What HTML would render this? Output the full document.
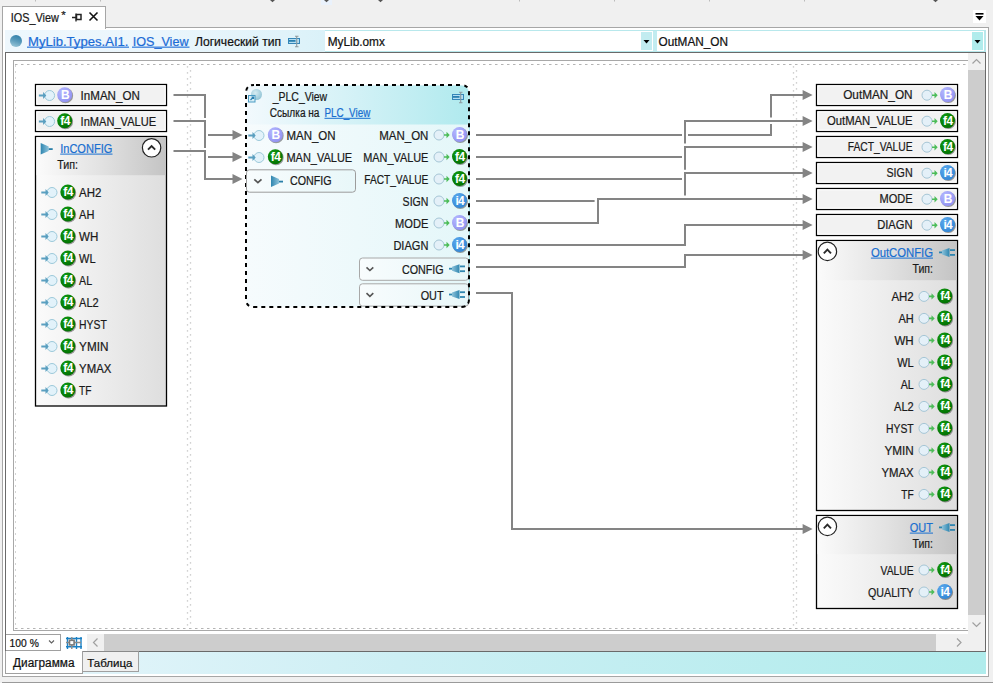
<!DOCTYPE html>
<html><head><meta charset="utf-8">
<style>
*{box-sizing:border-box}
html,body{margin:0;padding:0}
body{width:993px;height:683px;position:relative;overflow:hidden;background:#f0f0f0;font-family:"Liberation Sans",sans-serif;color:#1e1e1e}
.a{position:absolute}
.cv{position:absolute;left:0;top:0}
.lnk{color:#1a6fd0;text-decoration:underline}
</style></head><body>
<div class="a" style="left:321px;top:0;width:11px;height:5px;background:#eaf2fc"></div>
<svg class="a" style="left:0;top:0" width="993" height="6">
 <path d="M270 0h5l-2.5 2.2z M324 0h5l-2.5 2.2z M378 0h5l-2.5 2.2z M933 0h5l-2.5 2.2z" fill="#555"/>
 <path d="M35.5 0v1.5M100.5 0v1.5M519.5 0v1.5M614.5 0v1.5M709.5 0v1.5M804.5 0v1.5" stroke="#bbb" stroke-width="1"/>
</svg>
<!-- outer document panel -->
<div class="a" style="left:2px;top:27px;width:987px;height:650px;border:1px solid #a6a6a6;background:#fff"></div>
<!-- tab -->
<div class="a" style="left:2px;top:6px;width:104px;height:23px;border:1px solid #a6a6a6;border-bottom:none;background:#fff"></div>
<svg class="a" style="left:70px;top:10px" width="32" height="14" viewBox="0 0 32 14">
 <path d="M2 7.5h4M6 3.5v8" stroke="#222" stroke-width="1.3" fill="none"/>
 <rect x="6.5" y="4.5" width="4.5" height="5" fill="none" stroke="#222" stroke-width="1.5"/>
 <path d="M19.5 2.5l8 8M27.5 2.5l-8 8" stroke="#111" stroke-width="1.6"/>
</svg>
<!-- overflow icon -->
<div class="a" style="left:973px;top:10px;width:13px;height:13px;background:#fff"></div>
<svg class="a" style="left:973px;top:10px" width="13" height="13" viewBox="0 0 13 13">
 <rect x="2.5" y="3" width="8" height="1.6" fill="#000"/>
 <path d="M2.5 6h8l-4 4.6z" fill="#000"/>
</svg>
<!-- info bar -->
<div class="a" style="left:5px;top:30px;width:981px;height:22px;background:linear-gradient(90deg,#eef7fd 0px,#ebf6fc 150px,#e0f3fa 279px,#daf1f8 320px)"></div>
<div class="a" style="left:10px;top:35px;width:12px;height:12px;border-radius:50%;background:linear-gradient(200deg,#2a7aa6 0%,#5c9cbc 50%,#a4cede 100%)"></div>
<svg class="a" style="left:284px;top:32px" width="20" height="18" viewBox="0 0 20 18">
 <rect x="4.5" y="6.5" width="11" height="5" fill="#b4def2" stroke="#3586b8" stroke-width="1"/>
 <rect x="5" y="8" width="6.5" height="1.8" fill="#2a80b0"/>
 <path d="M12.7 4.5v10M11 4.3h3.5M11 14.7h3.5" stroke="#8c9aa0" stroke-width="1.1"/>
</svg>
<!-- combos -->
<div class="a" style="left:325px;top:30px;width:661px;height:22px;border-top:1px solid #b8e8ec;border-bottom:1px solid #b8e8ec;background:#fff"></div>
<div class="a" style="left:641px;top:32px;width:11px;height:18px;background:#c2ecf0"></div>
<div class="a" style="left:653px;top:31px;width:4px;height:20px;background:#c2ecf0"></div>
<svg class="a" style="left:641px;top:32px" width="11" height="18"><path d="M2.5 8h6l-3 3.5z" fill="#000"/></svg>
<div class="a" style="left:972px;top:32px;width:11px;height:18px;background:#b0ecec"></div>
<div class="a" style="left:984px;top:30px;width:2px;height:22px;background:#b8e8ec"></div>
<svg class="a" style="left:972px;top:32px" width="11" height="18"><path d="M2.5 8h6l-3 3.5z" fill="#000"/></svg>
<!-- diagram panel -->
<div class="a" style="left:5px;top:52px;width:981px;height:600px;border:1px solid #6a6a6a;border-right-color:#6a6a6a;background:#fff"></div>
<!-- canvas border -->
<div class="a" style="left:13px;top:60px;width:960px;height:571px;border:1px solid #a8a8a8;border-right:none;background:#fff"></div>
<svg class="cv" width="993" height="683" viewBox="0 0 993 683"><defs>
<radialGradient id="gB" cx="0.35" cy="0.3" r="0.8"><stop offset="0" stop-color="#b4b8ff"/><stop offset="1" stop-color="#8f8ff0"/></radialGradient>
<radialGradient id="gF" cx="0.35" cy="0.3" r="0.8"><stop offset="0" stop-color="#129a12"/><stop offset="1" stop-color="#006e00"/></radialGradient>
<radialGradient id="gI" cx="0.35" cy="0.3" r="0.8"><stop offset="0" stop-color="#5aa8ec"/><stop offset="1" stop-color="#2f84d4"/></radialGradient>
<radialGradient id="gNodeIco" cx="0.4" cy="0.35" r="0.7"><stop offset="0" stop-color="#d6ecf2"/><stop offset="1" stop-color="#8fc2d4"/></radialGradient>
<linearGradient id="gIco" x1="0" x2="1"><stop offset="0" stop-color="#2f86b0"/><stop offset="1" stop-color="#8cc2da"/></linearGradient>
<linearGradient id="gIco2" x1="0" x2="1"><stop offset="0" stop-color="#8cc2da"/><stop offset="1" stop-color="#2f86b0"/></linearGradient>
<linearGradient id="gHead" x1="0" y1="0" x2="1" y2="0"><stop offset="0" stop-color="#fbfbfb"/><stop offset="0.5" stop-color="#e2e2e2"/><stop offset="1" stop-color="#c4c4c4"/></linearGradient>
<linearGradient id="gBody" x1="0" x2="1"><stop offset="0" stop-color="#fbfbfb"/><stop offset="1" stop-color="#dedede"/></linearGradient>
<linearGradient id="gMidHead" x1="0" y1="0" x2="1" y2="0"><stop offset="0" stop-color="#f2f9fd"/><stop offset="0.5" stop-color="#d2f1f6"/><stop offset="1" stop-color="#b0eaee"/></linearGradient>
<linearGradient id="gMidBody" x1="0" x2="1"><stop offset="0" stop-color="#f6fbfd"/><stop offset="1" stop-color="#e4f7f9"/></linearGradient>
<linearGradient id="gSub" x1="0" x2="1"><stop offset="0" stop-color="#f8fcfd"/><stop offset="1" stop-color="#e8f7f9"/></linearGradient>
</defs><g font-family="Liberation Sans, sans-serif"><g stroke="#d4d4d4" stroke-width="1"><line x1="15" y1="64.5" x2="967" y2="64.5" stroke="#b4b4b4" stroke-width="1.2" stroke-dasharray="2.5 3.5"/><line x1="15" y1="628.5" x2="967" y2="628.5" stroke="#b4b4b4" stroke-width="1.2" stroke-dasharray="2.5 3.5"/><line x1="15.5" y1="65" x2="15.5" y2="628" stroke-dasharray="2 4"/><line x1="187.5" y1="66" x2="187.5" y2="628" stroke="#d2d2d2" stroke-width="1.3" stroke-dasharray="1.8 4.2" stroke-dashoffset="0"/><line x1="190.5" y1="66" x2="190.5" y2="628" stroke="#d2d2d2" stroke-width="1.3" stroke-dasharray="1.8 4.2" stroke-dashoffset="2"/><line x1="793.5" y1="66" x2="793.5" y2="628" stroke="#d2d2d2" stroke-width="1.3" stroke-dasharray="1.8 4.2" stroke-dashoffset="0"/><line x1="796.5" y1="66" x2="796.5" y2="628" stroke="#d2d2d2" stroke-width="1.3" stroke-dasharray="1.8 4.2" stroke-dashoffset="2"/></g><rect x="35.5" y="84.5" width="131" height="21" fill="#f2f2f2" stroke="#000" stroke-width="1.3"/><rect x="36.8" y="85.8" width="128.4" height="18.4" fill="none" stroke="#fff" stroke-width="1"/><circle cx="49.6" cy="95.5" r="5" fill="#e2f2fa" stroke="#9cc9da" stroke-width="1"/><path d="M38.900000000000006 94.5h4.2v-2.6l3.2 3.6l-3.2 3.6v-2.6h-4.2z" fill="#5a9fc0"/><circle cx="65.5" cy="95.7" r="7.6" fill="#000" opacity="0.38"/><circle cx="64.7" cy="94.8" r="7.5" fill="url(#gB)"/><text x="65.3" y="99.1" text-anchor="middle" font-size="12" font-weight="bold" fill="#fff">B</text><text x="80.60" y="99.7" font-size="12" textLength="59.20" lengthAdjust="spacingAndGlyphs" fill="#1a1a1a" stroke="#1a1a1a" stroke-width="0.22" >InMAN_ON</text><rect x="35.5" y="110.5" width="131" height="21" fill="#f2f2f2" stroke="#000" stroke-width="1.3"/><rect x="36.8" y="111.8" width="128.4" height="18.4" fill="none" stroke="#fff" stroke-width="1"/><circle cx="49.6" cy="121.5" r="5" fill="#e2f2fa" stroke="#9cc9da" stroke-width="1"/><path d="M38.900000000000006 120.5h4.2v-2.6l3.2 3.6l-3.2 3.6v-2.6h-4.2z" fill="#5a9fc0"/><circle cx="65.5" cy="121.7" r="7.6" fill="#000" opacity="0.38"/><circle cx="64.7" cy="120.8" r="7.5" fill="url(#gF)"/><text x="65.0" y="125.0" text-anchor="middle" font-size="12" font-weight="bold" fill="#fff" letter-spacing="-0.6">f4</text><text x="80.60" y="125.7" font-size="12" textLength="75.50" lengthAdjust="spacingAndGlyphs" fill="#1a1a1a" stroke="#1a1a1a" stroke-width="0.22" >InMAN_VALUE</text><rect x="35.5" y="136.5" width="131" height="269.5" fill="url(#gBody)" stroke="#000" stroke-width="1.3"/><rect x="36.5" y="137.2" width="129.2" height="38" fill="url(#gHead)"/><path d="M40.7 143L48.7 146.5V151L40.7 154.5Z" fill="url(#gIco)"/><rect x="48.7" y="148.2" width="4" height="1.8" fill="#2a7fa8"/><text x="60.20" y="152.7" font-size="12" textLength="52.10" lengthAdjust="spacingAndGlyphs" fill="#1a6fd0" stroke="#1a6fd0" stroke-width="0.22" >InCONFIG</text><rect x="60.2" y="153.6" width="52.3" height="1" fill="#1a6fd0"/><text x="57.20" y="168.8" font-size="12" textLength="20.80" lengthAdjust="spacingAndGlyphs" fill="#1a1a1a" stroke="#1a1a1a" stroke-width="0.22" >Тип:</text><circle cx="151.6" cy="147.8" r="9.2" fill="#fff" stroke="#222" stroke-width="1.2"/><path d="M148.0 149.70000000000002L151.6 146.10000000000002L155.2 149.70000000000002" fill="none" stroke="#2a2a2a" stroke-width="1.9"/><circle cx="52" cy="192.5" r="5" fill="#e2f2fa" stroke="#9cc9da" stroke-width="1"/><path d="M41.3 191.5h4.2v-2.6l3.2 3.6l-3.2 3.6v-2.6h-4.2z" fill="#5a9fc0"/><circle cx="68.6" cy="192.9" r="7.6" fill="#000" opacity="0.38"/><circle cx="67.8" cy="192.0" r="7.5" fill="url(#gF)"/><text x="68.1" y="196.2" text-anchor="middle" font-size="12" font-weight="bold" fill="#fff" letter-spacing="-0.6">f4</text><text x="79.10" y="197.1" font-size="12" textLength="22.30" lengthAdjust="spacingAndGlyphs" fill="#1a1a1a" stroke="#1a1a1a" stroke-width="0.22" >AH2</text><circle cx="52" cy="214.5" r="5" fill="#e2f2fa" stroke="#9cc9da" stroke-width="1"/><path d="M41.3 213.5h4.2v-2.6l3.2 3.6l-3.2 3.6v-2.6h-4.2z" fill="#5a9fc0"/><circle cx="68.6" cy="214.9" r="7.6" fill="#000" opacity="0.38"/><circle cx="67.8" cy="214.0" r="7.5" fill="url(#gF)"/><text x="68.1" y="218.2" text-anchor="middle" font-size="12" font-weight="bold" fill="#fff" letter-spacing="-0.6">f4</text><text x="79.10" y="219.1" font-size="12" textLength="15.30" lengthAdjust="spacingAndGlyphs" fill="#1a1a1a" stroke="#1a1a1a" stroke-width="0.22" >AH</text><circle cx="52" cy="236.5" r="5" fill="#e2f2fa" stroke="#9cc9da" stroke-width="1"/><path d="M41.3 235.5h4.2v-2.6l3.2 3.6l-3.2 3.6v-2.6h-4.2z" fill="#5a9fc0"/><circle cx="68.6" cy="236.9" r="7.6" fill="#000" opacity="0.38"/><circle cx="67.8" cy="236.0" r="7.5" fill="url(#gF)"/><text x="68.1" y="240.2" text-anchor="middle" font-size="12" font-weight="bold" fill="#fff" letter-spacing="-0.6">f4</text><text x="79.10" y="241.1" font-size="12" textLength="19.30" lengthAdjust="spacingAndGlyphs" fill="#1a1a1a" stroke="#1a1a1a" stroke-width="0.22" >WH</text><circle cx="52" cy="258.5" r="5" fill="#e2f2fa" stroke="#9cc9da" stroke-width="1"/><path d="M41.3 257.5h4.2v-2.6l3.2 3.6l-3.2 3.6v-2.6h-4.2z" fill="#5a9fc0"/><circle cx="68.6" cy="258.9" r="7.6" fill="#000" opacity="0.38"/><circle cx="67.8" cy="258.0" r="7.5" fill="url(#gF)"/><text x="68.1" y="262.2" text-anchor="middle" font-size="12" font-weight="bold" fill="#fff" letter-spacing="-0.6">f4</text><text x="79.10" y="263.1" font-size="12" textLength="16.50" lengthAdjust="spacingAndGlyphs" fill="#1a1a1a" stroke="#1a1a1a" stroke-width="0.22" >WL</text><circle cx="52" cy="280.5" r="5" fill="#e2f2fa" stroke="#9cc9da" stroke-width="1"/><path d="M41.3 279.5h4.2v-2.6l3.2 3.6l-3.2 3.6v-2.6h-4.2z" fill="#5a9fc0"/><circle cx="68.6" cy="280.9" r="7.6" fill="#000" opacity="0.38"/><circle cx="67.8" cy="280.0" r="7.5" fill="url(#gF)"/><text x="68.1" y="284.2" text-anchor="middle" font-size="12" font-weight="bold" fill="#fff" letter-spacing="-0.6">f4</text><text x="79.10" y="285.1" font-size="12" textLength="13.00" lengthAdjust="spacingAndGlyphs" fill="#1a1a1a" stroke="#1a1a1a" stroke-width="0.22" >AL</text><circle cx="52" cy="302.5" r="5" fill="#e2f2fa" stroke="#9cc9da" stroke-width="1"/><path d="M41.3 301.5h4.2v-2.6l3.2 3.6l-3.2 3.6v-2.6h-4.2z" fill="#5a9fc0"/><circle cx="68.6" cy="302.9" r="7.6" fill="#000" opacity="0.38"/><circle cx="67.8" cy="302.0" r="7.5" fill="url(#gF)"/><text x="68.1" y="306.2" text-anchor="middle" font-size="12" font-weight="bold" fill="#fff" letter-spacing="-0.6">f4</text><text x="79.10" y="307.1" font-size="12" textLength="19.60" lengthAdjust="spacingAndGlyphs" fill="#1a1a1a" stroke="#1a1a1a" stroke-width="0.22" >AL2</text><circle cx="52" cy="324.5" r="5" fill="#e2f2fa" stroke="#9cc9da" stroke-width="1"/><path d="M41.3 323.5h4.2v-2.6l3.2 3.6l-3.2 3.6v-2.6h-4.2z" fill="#5a9fc0"/><circle cx="68.6" cy="324.9" r="7.6" fill="#000" opacity="0.38"/><circle cx="67.8" cy="324.0" r="7.5" fill="url(#gF)"/><text x="68.1" y="328.2" text-anchor="middle" font-size="12" font-weight="bold" fill="#fff" letter-spacing="-0.6">f4</text><text x="79.10" y="329.1" font-size="12" textLength="27.70" lengthAdjust="spacingAndGlyphs" fill="#1a1a1a" stroke="#1a1a1a" stroke-width="0.22" >HYST</text><circle cx="52" cy="346.5" r="5" fill="#e2f2fa" stroke="#9cc9da" stroke-width="1"/><path d="M41.3 345.5h4.2v-2.6l3.2 3.6l-3.2 3.6v-2.6h-4.2z" fill="#5a9fc0"/><circle cx="68.6" cy="346.9" r="7.6" fill="#000" opacity="0.38"/><circle cx="67.8" cy="346.0" r="7.5" fill="url(#gF)"/><text x="68.1" y="350.2" text-anchor="middle" font-size="12" font-weight="bold" fill="#fff" letter-spacing="-0.6">f4</text><text x="79.10" y="351.1" font-size="12" textLength="29.30" lengthAdjust="spacingAndGlyphs" fill="#1a1a1a" stroke="#1a1a1a" stroke-width="0.22" >YMIN</text><circle cx="52" cy="368.5" r="5" fill="#e2f2fa" stroke="#9cc9da" stroke-width="1"/><path d="M41.3 367.5h4.2v-2.6l3.2 3.6l-3.2 3.6v-2.6h-4.2z" fill="#5a9fc0"/><circle cx="68.6" cy="368.9" r="7.6" fill="#000" opacity="0.38"/><circle cx="67.8" cy="368.0" r="7.5" fill="url(#gF)"/><text x="68.1" y="372.2" text-anchor="middle" font-size="12" font-weight="bold" fill="#fff" letter-spacing="-0.6">f4</text><text x="79.10" y="373.1" font-size="12" textLength="32.20" lengthAdjust="spacingAndGlyphs" fill="#1a1a1a" stroke="#1a1a1a" stroke-width="0.22" >YMAX</text><circle cx="52" cy="390.5" r="5" fill="#e2f2fa" stroke="#9cc9da" stroke-width="1"/><path d="M41.3 389.5h4.2v-2.6l3.2 3.6l-3.2 3.6v-2.6h-4.2z" fill="#5a9fc0"/><circle cx="68.6" cy="390.9" r="7.6" fill="#000" opacity="0.38"/><circle cx="67.8" cy="390.0" r="7.5" fill="url(#gF)"/><text x="68.1" y="394.2" text-anchor="middle" font-size="12" font-weight="bold" fill="#fff" letter-spacing="-0.6">f4</text><text x="79.10" y="395.1" font-size="12" textLength="12.40" lengthAdjust="spacingAndGlyphs" fill="#1a1a1a" stroke="#1a1a1a" stroke-width="0.22" >TF</text><path d="M254 85 H461 Q469 85 469 93 V299 Q469 307 461 307 H254 Q246 307 246 299 V93 Q246 85 254 85Z" fill="url(#gMidBody)"/><line x1="469.5" y1="92" x2="469.5" y2="300" stroke="#a8e6ea" stroke-width="1"/><path d="M254 85.5 H461 Q468.5 85.5 468.5 93 V124.5 H246.5 V93 Q246.5 85.5 254 85.5Z" fill="url(#gMidHead)"/><circle cx="256.5" cy="94.5" r="5.5" fill="url(#gNodeIco)"/><rect x="248.5" y="95.5" width="6.5" height="6.5" fill="#d8eef6" stroke="#4a9cc4" stroke-width="1"/><path d="M250.5 100 L253.5 97 M251.5 97 h2 v2" stroke="#2a7fb0" stroke-width="1.2" fill="none"/><text x="272.77" y="101.2" font-size="12" textLength="54.40" lengthAdjust="spacingAndGlyphs" fill="#1a1a1a" stroke="#1a1a1a" stroke-width="0.22" >_PLC_View</text><text x="269.80" y="116.6" font-size="12" textLength="49.69" lengthAdjust="spacingAndGlyphs" fill="#1a1a1a" stroke="#1a1a1a" stroke-width="0.22" >Ссылка на</text><text x="324.50" y="116.6" font-size="12" textLength="45.77" lengthAdjust="spacingAndGlyphs" fill="#1a6fd0" stroke="#1a6fd0" stroke-width="0.22" >PLC_View</text><rect x="324.5" y="117.8" width="46" height="1" fill="#1a6fd0"/><rect x="452.5" y="94.5" width="11" height="5" fill="#b4def2" stroke="#3586b8" stroke-width="1"/><rect x="453" y="96" width="6.5" height="1.8" fill="#2a80b0"/><path d="M460.7 92.5v10M459 92.3h3.5M459 102.7h3.5" stroke="#8c9aa0" stroke-width="1.1"/><circle cx="259" cy="135.5" r="5" fill="#e2f2fa" stroke="#9cc9da" stroke-width="1"/><path d="M248.3 134.5h4.2v-2.6l3.2 3.6l-3.2 3.6v-2.6h-4.2z" fill="#5a9fc0"/><circle cx="276.1" cy="135.70000000000002" r="7.6" fill="#000" opacity="0.38"/><circle cx="275.3" cy="134.8" r="7.5" fill="url(#gB)"/><text x="275.90000000000003" y="139.10000000000002" text-anchor="middle" font-size="12" font-weight="bold" fill="#fff">B</text><text x="286.40" y="139.8" font-size="12" textLength="49.20" lengthAdjust="spacingAndGlyphs" fill="#1a1a1a" stroke="#1a1a1a" stroke-width="0.22" >MAN_ON</text><circle cx="259" cy="157.5" r="5" fill="#e2f2fa" stroke="#9cc9da" stroke-width="1"/><path d="M248.3 156.5h4.2v-2.6l3.2 3.6l-3.2 3.6v-2.6h-4.2z" fill="#5a9fc0"/><circle cx="276.1" cy="157.70000000000002" r="7.6" fill="#000" opacity="0.38"/><circle cx="275.3" cy="156.8" r="7.5" fill="url(#gF)"/><text x="275.6" y="161.0" text-anchor="middle" font-size="12" font-weight="bold" fill="#fff" letter-spacing="-0.6">f4</text><text x="286.40" y="161.7" font-size="12" textLength="65.80" lengthAdjust="spacingAndGlyphs" fill="#1a1a1a" stroke="#1a1a1a" stroke-width="0.22" >MAN_VALUE</text><text x="379.30" y="139.7" font-size="12" textLength="49.10" lengthAdjust="spacingAndGlyphs" fill="#1a1a1a" stroke="#1a1a1a" stroke-width="0.22" >MAN_ON</text><circle cx="439" cy="135" r="5" fill="#e4f0f8" stroke="#a6c6d6" stroke-width="1"/><path d="M444 134.2h2.5v-2.4l3.2 3.2l-3.2 3.2v-2.4h-2.5z" fill="#4cbc58"/><circle cx="460.3" cy="135.4" r="7.6" fill="#000" opacity="0.38"/><circle cx="459.5" cy="134.5" r="7.5" fill="url(#gB)"/><text x="460.1" y="138.8" text-anchor="middle" font-size="12" font-weight="bold" fill="#fff">B</text><text x="363.20" y="161.7" font-size="12" textLength="65.20" lengthAdjust="spacingAndGlyphs" fill="#1a1a1a" stroke="#1a1a1a" stroke-width="0.22" >MAN_VALUE</text><circle cx="439" cy="157" r="5" fill="#e4f0f8" stroke="#a6c6d6" stroke-width="1"/><path d="M444 156.2h2.5v-2.4l3.2 3.2l-3.2 3.2v-2.4h-2.5z" fill="#4cbc58"/><circle cx="460.3" cy="157.4" r="7.6" fill="#000" opacity="0.38"/><circle cx="459.5" cy="156.5" r="7.5" fill="url(#gF)"/><text x="459.8" y="160.7" text-anchor="middle" font-size="12" font-weight="bold" fill="#fff" letter-spacing="-0.6">f4</text><text x="364.30" y="183.7" font-size="12" textLength="64.10" lengthAdjust="spacingAndGlyphs" fill="#1a1a1a" stroke="#1a1a1a" stroke-width="0.22" >FACT_VALUE</text><circle cx="439" cy="179" r="5" fill="#e4f0f8" stroke="#a6c6d6" stroke-width="1"/><path d="M444 178.2h2.5v-2.4l3.2 3.2l-3.2 3.2v-2.4h-2.5z" fill="#4cbc58"/><circle cx="460.3" cy="179.4" r="7.6" fill="#000" opacity="0.38"/><circle cx="459.5" cy="178.5" r="7.5" fill="url(#gF)"/><text x="459.8" y="182.7" text-anchor="middle" font-size="12" font-weight="bold" fill="#fff" letter-spacing="-0.6">f4</text><text x="402.60" y="205.7" font-size="12" textLength="25.80" lengthAdjust="spacingAndGlyphs" fill="#1a1a1a" stroke="#1a1a1a" stroke-width="0.22" >SIGN</text><circle cx="439" cy="201" r="5" fill="#e4f0f8" stroke="#a6c6d6" stroke-width="1"/><path d="M444 200.2h2.5v-2.4l3.2 3.2l-3.2 3.2v-2.4h-2.5z" fill="#4cbc58"/><circle cx="460.3" cy="201.4" r="7.6" fill="#000" opacity="0.38"/><circle cx="459.5" cy="200.5" r="7.5" fill="url(#gI)"/><text x="459.8" y="204.7" text-anchor="middle" font-size="12" font-weight="bold" fill="#fff" letter-spacing="-0.6">i4</text><text x="395.10" y="227.7" font-size="12" textLength="33.30" lengthAdjust="spacingAndGlyphs" fill="#1a1a1a" stroke="#1a1a1a" stroke-width="0.22" >MODE</text><circle cx="439" cy="223" r="5" fill="#e4f0f8" stroke="#a6c6d6" stroke-width="1"/><path d="M444 222.2h2.5v-2.4l3.2 3.2l-3.2 3.2v-2.4h-2.5z" fill="#4cbc58"/><circle cx="460.3" cy="223.4" r="7.6" fill="#000" opacity="0.38"/><circle cx="459.5" cy="222.5" r="7.5" fill="url(#gB)"/><text x="460.1" y="226.8" text-anchor="middle" font-size="12" font-weight="bold" fill="#fff">B</text><text x="393.40" y="249.7" font-size="12" textLength="35.00" lengthAdjust="spacingAndGlyphs" fill="#1a1a1a" stroke="#1a1a1a" stroke-width="0.22" >DIAGN</text><circle cx="439" cy="245" r="5" fill="#e4f0f8" stroke="#a6c6d6" stroke-width="1"/><path d="M444 244.2h2.5v-2.4l3.2 3.2l-3.2 3.2v-2.4h-2.5z" fill="#4cbc58"/><circle cx="460.3" cy="245.4" r="7.6" fill="#000" opacity="0.38"/><circle cx="459.5" cy="244.5" r="7.5" fill="url(#gI)"/><text x="459.8" y="248.7" text-anchor="middle" font-size="12" font-weight="bold" fill="#fff" letter-spacing="-0.6">i4</text><rect x="359.5" y="258" width="109" height="22.3" rx="3" fill="url(#gSub)" stroke="#a8a8a8" stroke-width="1"/><path d="M366.5 267.3 l3.4 3.2 l3.4 -3.2" fill="none" stroke="#555" stroke-width="1.6"/><text x="401.90" y="273.7" font-size="12" textLength="41.70" lengthAdjust="spacingAndGlyphs" fill="#1a1a1a" stroke="#1a1a1a" stroke-width="0.22" >CONFIG</text><rect x="449" y="267.8" width="3.5" height="1.8" fill="#2f86b0"/><path d="M452 266.7L459.5 264.2V273.2L452 270.7Z" fill="url(#gIco2)"/><rect x="460" y="265.5" width="5" height="1.8" fill="#2f86b0"/><rect x="460" y="270.3" width="5" height="1.8" fill="#2f86b0"/><rect x="359.5" y="283.8" width="109" height="22.3" rx="3" fill="url(#gSub)" stroke="#a8a8a8" stroke-width="1"/><path d="M366.5 293.1 l3.4 3.2 l3.4 -3.2" fill="none" stroke="#555" stroke-width="1.6"/><text x="420.70" y="299.5" font-size="12" textLength="22.90" lengthAdjust="spacingAndGlyphs" fill="#1a1a1a" stroke="#1a1a1a" stroke-width="0.22" >OUT</text><rect x="449" y="293.6" width="3.5" height="1.8" fill="#2f86b0"/><path d="M452 292.5L459.5 290.0V299.0L452 296.5Z" fill="url(#gIco2)"/><rect x="460" y="291.3" width="5" height="1.8" fill="#2f86b0"/><rect x="460" y="296.1" width="5" height="1.8" fill="#2f86b0"/><path d="M254 85 H461 Q469 85 469 93 V299 Q469 307 461 307 H254 Q246 307 246 299 V93 Q246 85 254 85Z" fill="none" stroke="#000" stroke-width="2" stroke-dasharray="4 4" stroke-dashoffset="-2"/><rect x="246.5" y="169.8" width="109" height="22.4" rx="3" fill="url(#gSub)" stroke="#9c9c9c" stroke-width="1"/><path d="M254.3 179.3 l3.6 3.4 l3.6 -3.4" fill="none" stroke="#555" stroke-width="1.7"/><path d="M271 175.5L279 179.0V183.5L271 187.0Z" fill="url(#gIco)"/><rect x="279" y="180.7" width="4" height="1.8" fill="#2a7fa8"/><text x="290.00" y="185.4" font-size="12" textLength="41.60" lengthAdjust="spacingAndGlyphs" fill="#1a1a1a" stroke="#1a1a1a" stroke-width="0.22" >CONFIG</text><rect x="816.5" y="84.5" width="141" height="21" fill="#f2f2f2" stroke="#000" stroke-width="1.3"/><rect x="817.8" y="85.8" width="138.4" height="18.4" fill="none" stroke="#fff" stroke-width="1"/><text x="843.20" y="99.4" font-size="12" textLength="69.40" lengthAdjust="spacingAndGlyphs" fill="#1a1a1a" stroke="#1a1a1a" stroke-width="0.22" >OutMAN_ON</text><circle cx="927" cy="95.2" r="5" fill="#e4f0f8" stroke="#a6c6d6" stroke-width="1"/><path d="M932 94.4h2.5v-2.4l3.2 3.2l-3.2 3.2v-2.4h-2.5z" fill="#4cbc58"/><circle cx="948.3" cy="95.5" r="7.6" fill="#000" opacity="0.38"/><circle cx="947.5" cy="94.6" r="7.5" fill="url(#gB)"/><text x="948.1" y="98.89999999999999" text-anchor="middle" font-size="12" font-weight="bold" fill="#fff">B</text><rect x="816.5" y="110.5" width="141" height="21" fill="#f2f2f2" stroke="#000" stroke-width="1.3"/><rect x="817.8" y="111.8" width="138.4" height="18.4" fill="none" stroke="#fff" stroke-width="1"/><text x="827.00" y="125.4" font-size="12" textLength="85.60" lengthAdjust="spacingAndGlyphs" fill="#1a1a1a" stroke="#1a1a1a" stroke-width="0.22" >OutMAN_VALUE</text><circle cx="927" cy="121.2" r="5" fill="#e4f0f8" stroke="#a6c6d6" stroke-width="1"/><path d="M932 120.4h2.5v-2.4l3.2 3.2l-3.2 3.2v-2.4h-2.5z" fill="#4cbc58"/><circle cx="948.3" cy="121.5" r="7.6" fill="#000" opacity="0.38"/><circle cx="947.5" cy="120.6" r="7.5" fill="url(#gF)"/><text x="947.8" y="124.8" text-anchor="middle" font-size="12" font-weight="bold" fill="#fff" letter-spacing="-0.6">f4</text><rect x="816.5" y="136.5" width="141" height="21" fill="#f2f2f2" stroke="#000" stroke-width="1.3"/><rect x="817.8" y="137.8" width="138.4" height="18.4" fill="none" stroke="#fff" stroke-width="1"/><text x="847.70" y="151.4" font-size="12" textLength="64.90" lengthAdjust="spacingAndGlyphs" fill="#1a1a1a" stroke="#1a1a1a" stroke-width="0.22" >FACT_VALUE</text><circle cx="927" cy="147.2" r="5" fill="#e4f0f8" stroke="#a6c6d6" stroke-width="1"/><path d="M932 146.39999999999998h2.5v-2.4l3.2 3.2l-3.2 3.2v-2.4h-2.5z" fill="#4cbc58"/><circle cx="948.3" cy="147.5" r="7.6" fill="#000" opacity="0.38"/><circle cx="947.5" cy="146.6" r="7.5" fill="url(#gF)"/><text x="947.8" y="150.79999999999998" text-anchor="middle" font-size="12" font-weight="bold" fill="#fff" letter-spacing="-0.6">f4</text><rect x="816.5" y="162.5" width="141" height="21" fill="#f2f2f2" stroke="#000" stroke-width="1.3"/><rect x="817.8" y="163.8" width="138.4" height="18.4" fill="none" stroke="#fff" stroke-width="1"/><text x="886.50" y="177.4" font-size="12" textLength="26.10" lengthAdjust="spacingAndGlyphs" fill="#1a1a1a" stroke="#1a1a1a" stroke-width="0.22" >SIGN</text><circle cx="927" cy="173.2" r="5" fill="#e4f0f8" stroke="#a6c6d6" stroke-width="1"/><path d="M932 172.39999999999998h2.5v-2.4l3.2 3.2l-3.2 3.2v-2.4h-2.5z" fill="#4cbc58"/><circle cx="948.3" cy="173.5" r="7.6" fill="#000" opacity="0.38"/><circle cx="947.5" cy="172.6" r="7.5" fill="url(#gI)"/><text x="947.8" y="176.79999999999998" text-anchor="middle" font-size="12" font-weight="bold" fill="#fff" letter-spacing="-0.6">i4</text><rect x="816.5" y="188.5" width="141" height="21" fill="#f2f2f2" stroke="#000" stroke-width="1.3"/><rect x="817.8" y="189.8" width="138.4" height="18.4" fill="none" stroke="#fff" stroke-width="1"/><text x="879.50" y="203.4" font-size="12" textLength="33.10" lengthAdjust="spacingAndGlyphs" fill="#1a1a1a" stroke="#1a1a1a" stroke-width="0.22" >MODE</text><circle cx="927" cy="199.2" r="5" fill="#e4f0f8" stroke="#a6c6d6" stroke-width="1"/><path d="M932 198.39999999999998h2.5v-2.4l3.2 3.2l-3.2 3.2v-2.4h-2.5z" fill="#4cbc58"/><circle cx="948.3" cy="199.5" r="7.6" fill="#000" opacity="0.38"/><circle cx="947.5" cy="198.6" r="7.5" fill="url(#gB)"/><text x="948.1" y="202.9" text-anchor="middle" font-size="12" font-weight="bold" fill="#fff">B</text><rect x="816.5" y="214.5" width="141" height="21" fill="#f2f2f2" stroke="#000" stroke-width="1.3"/><rect x="817.8" y="215.8" width="138.4" height="18.4" fill="none" stroke="#fff" stroke-width="1"/><text x="877.20" y="229.4" font-size="12" textLength="35.40" lengthAdjust="spacingAndGlyphs" fill="#1a1a1a" stroke="#1a1a1a" stroke-width="0.22" >DIAGN</text><circle cx="927" cy="225.2" r="5" fill="#e4f0f8" stroke="#a6c6d6" stroke-width="1"/><path d="M932 224.39999999999998h2.5v-2.4l3.2 3.2l-3.2 3.2v-2.4h-2.5z" fill="#4cbc58"/><circle cx="948.3" cy="225.5" r="7.6" fill="#000" opacity="0.38"/><circle cx="947.5" cy="224.6" r="7.5" fill="url(#gI)"/><text x="947.8" y="228.79999999999998" text-anchor="middle" font-size="12" font-weight="bold" fill="#fff" letter-spacing="-0.6">i4</text><rect x="816.5" y="240.5" width="141" height="270" fill="url(#gBody)" stroke="#000" stroke-width="1.3"/><rect x="817.5" y="241.2" width="139.3" height="39" fill="url(#gHead)"/><circle cx="827.4" cy="251.4" r="9.2" fill="#fff" stroke="#222" stroke-width="1.2"/><path d="M823.8 253.3L827.4 249.70000000000002L831.0 253.3" fill="none" stroke="#2a2a2a" stroke-width="1.9"/><text x="870.90" y="256.6" font-size="12" textLength="62.11" lengthAdjust="spacingAndGlyphs" fill="#1a6fd0" stroke="#1a6fd0" stroke-width="0.22" >OutCONFIG</text><rect x="870.9" y="257.6" width="62.1" height="1" fill="#1a6fd0"/><rect x="939" y="251.5" width="3.5" height="1.8" fill="#2f86b0"/><path d="M942 250.4L949.5 247.9V256.9L942 254.4Z" fill="url(#gIco2)"/><rect x="950" y="249.20000000000002" width="5" height="1.8" fill="#2f86b0"/><rect x="950" y="254.0" width="5" height="1.8" fill="#2f86b0"/><text x="912.50" y="272.6" font-size="12" textLength="20.50" lengthAdjust="spacingAndGlyphs" fill="#1a1a1a" stroke="#1a1a1a" stroke-width="0.22" >Тип:</text><text x="891.40" y="301.0" font-size="12" textLength="22.30" lengthAdjust="spacingAndGlyphs" fill="#1a1a1a" stroke="#1a1a1a" stroke-width="0.22" >AH2</text><circle cx="924" cy="296.4" r="5" fill="#e4f0f8" stroke="#a6c6d6" stroke-width="1"/><path d="M929 295.59999999999997h2.5v-2.4l3.2 3.2l-3.2 3.2v-2.4h-2.5z" fill="#4cbc58"/><circle cx="945.5" cy="296.79999999999995" r="7.6" fill="#000" opacity="0.38"/><circle cx="944.7" cy="295.9" r="7.5" fill="url(#gF)"/><text x="945.0" y="300.09999999999997" text-anchor="middle" font-size="12" font-weight="bold" fill="#fff" letter-spacing="-0.6">f4</text><text x="898.40" y="323.0" font-size="12" textLength="15.30" lengthAdjust="spacingAndGlyphs" fill="#1a1a1a" stroke="#1a1a1a" stroke-width="0.22" >AH</text><circle cx="924" cy="318.4" r="5" fill="#e4f0f8" stroke="#a6c6d6" stroke-width="1"/><path d="M929 317.59999999999997h2.5v-2.4l3.2 3.2l-3.2 3.2v-2.4h-2.5z" fill="#4cbc58"/><circle cx="945.5" cy="318.79999999999995" r="7.6" fill="#000" opacity="0.38"/><circle cx="944.7" cy="317.9" r="7.5" fill="url(#gF)"/><text x="945.0" y="322.09999999999997" text-anchor="middle" font-size="12" font-weight="bold" fill="#fff" letter-spacing="-0.6">f4</text><text x="894.40" y="345.0" font-size="12" textLength="19.30" lengthAdjust="spacingAndGlyphs" fill="#1a1a1a" stroke="#1a1a1a" stroke-width="0.22" >WH</text><circle cx="924" cy="340.4" r="5" fill="#e4f0f8" stroke="#a6c6d6" stroke-width="1"/><path d="M929 339.59999999999997h2.5v-2.4l3.2 3.2l-3.2 3.2v-2.4h-2.5z" fill="#4cbc58"/><circle cx="945.5" cy="340.79999999999995" r="7.6" fill="#000" opacity="0.38"/><circle cx="944.7" cy="339.9" r="7.5" fill="url(#gF)"/><text x="945.0" y="344.09999999999997" text-anchor="middle" font-size="12" font-weight="bold" fill="#fff" letter-spacing="-0.6">f4</text><text x="897.20" y="367.0" font-size="12" textLength="16.50" lengthAdjust="spacingAndGlyphs" fill="#1a1a1a" stroke="#1a1a1a" stroke-width="0.22" >WL</text><circle cx="924" cy="362.4" r="5" fill="#e4f0f8" stroke="#a6c6d6" stroke-width="1"/><path d="M929 361.59999999999997h2.5v-2.4l3.2 3.2l-3.2 3.2v-2.4h-2.5z" fill="#4cbc58"/><circle cx="945.5" cy="362.79999999999995" r="7.6" fill="#000" opacity="0.38"/><circle cx="944.7" cy="361.9" r="7.5" fill="url(#gF)"/><text x="945.0" y="366.09999999999997" text-anchor="middle" font-size="12" font-weight="bold" fill="#fff" letter-spacing="-0.6">f4</text><text x="900.70" y="389.0" font-size="12" textLength="13.00" lengthAdjust="spacingAndGlyphs" fill="#1a1a1a" stroke="#1a1a1a" stroke-width="0.22" >AL</text><circle cx="924" cy="384.4" r="5" fill="#e4f0f8" stroke="#a6c6d6" stroke-width="1"/><path d="M929 383.59999999999997h2.5v-2.4l3.2 3.2l-3.2 3.2v-2.4h-2.5z" fill="#4cbc58"/><circle cx="945.5" cy="384.79999999999995" r="7.6" fill="#000" opacity="0.38"/><circle cx="944.7" cy="383.9" r="7.5" fill="url(#gF)"/><text x="945.0" y="388.09999999999997" text-anchor="middle" font-size="12" font-weight="bold" fill="#fff" letter-spacing="-0.6">f4</text><text x="894.10" y="411.0" font-size="12" textLength="19.60" lengthAdjust="spacingAndGlyphs" fill="#1a1a1a" stroke="#1a1a1a" stroke-width="0.22" >AL2</text><circle cx="924" cy="406.4" r="5" fill="#e4f0f8" stroke="#a6c6d6" stroke-width="1"/><path d="M929 405.59999999999997h2.5v-2.4l3.2 3.2l-3.2 3.2v-2.4h-2.5z" fill="#4cbc58"/><circle cx="945.5" cy="406.79999999999995" r="7.6" fill="#000" opacity="0.38"/><circle cx="944.7" cy="405.9" r="7.5" fill="url(#gF)"/><text x="945.0" y="410.09999999999997" text-anchor="middle" font-size="12" font-weight="bold" fill="#fff" letter-spacing="-0.6">f4</text><text x="886.00" y="433.0" font-size="12" textLength="27.70" lengthAdjust="spacingAndGlyphs" fill="#1a1a1a" stroke="#1a1a1a" stroke-width="0.22" >HYST</text><circle cx="924" cy="428.4" r="5" fill="#e4f0f8" stroke="#a6c6d6" stroke-width="1"/><path d="M929 427.59999999999997h2.5v-2.4l3.2 3.2l-3.2 3.2v-2.4h-2.5z" fill="#4cbc58"/><circle cx="945.5" cy="428.79999999999995" r="7.6" fill="#000" opacity="0.38"/><circle cx="944.7" cy="427.9" r="7.5" fill="url(#gF)"/><text x="945.0" y="432.09999999999997" text-anchor="middle" font-size="12" font-weight="bold" fill="#fff" letter-spacing="-0.6">f4</text><text x="884.40" y="455.0" font-size="12" textLength="29.30" lengthAdjust="spacingAndGlyphs" fill="#1a1a1a" stroke="#1a1a1a" stroke-width="0.22" >YMIN</text><circle cx="924" cy="450.4" r="5" fill="#e4f0f8" stroke="#a6c6d6" stroke-width="1"/><path d="M929 449.59999999999997h2.5v-2.4l3.2 3.2l-3.2 3.2v-2.4h-2.5z" fill="#4cbc58"/><circle cx="945.5" cy="450.79999999999995" r="7.6" fill="#000" opacity="0.38"/><circle cx="944.7" cy="449.9" r="7.5" fill="url(#gF)"/><text x="945.0" y="454.09999999999997" text-anchor="middle" font-size="12" font-weight="bold" fill="#fff" letter-spacing="-0.6">f4</text><text x="881.50" y="477.0" font-size="12" textLength="32.20" lengthAdjust="spacingAndGlyphs" fill="#1a1a1a" stroke="#1a1a1a" stroke-width="0.22" >YMAX</text><circle cx="924" cy="472.4" r="5" fill="#e4f0f8" stroke="#a6c6d6" stroke-width="1"/><path d="M929 471.59999999999997h2.5v-2.4l3.2 3.2l-3.2 3.2v-2.4h-2.5z" fill="#4cbc58"/><circle cx="945.5" cy="472.79999999999995" r="7.6" fill="#000" opacity="0.38"/><circle cx="944.7" cy="471.9" r="7.5" fill="url(#gF)"/><text x="945.0" y="476.09999999999997" text-anchor="middle" font-size="12" font-weight="bold" fill="#fff" letter-spacing="-0.6">f4</text><text x="901.30" y="499.0" font-size="12" textLength="12.40" lengthAdjust="spacingAndGlyphs" fill="#1a1a1a" stroke="#1a1a1a" stroke-width="0.22" >TF</text><circle cx="924" cy="494.4" r="5" fill="#e4f0f8" stroke="#a6c6d6" stroke-width="1"/><path d="M929 493.59999999999997h2.5v-2.4l3.2 3.2l-3.2 3.2v-2.4h-2.5z" fill="#4cbc58"/><circle cx="945.5" cy="494.79999999999995" r="7.6" fill="#000" opacity="0.38"/><circle cx="944.7" cy="493.9" r="7.5" fill="url(#gF)"/><text x="945.0" y="498.09999999999997" text-anchor="middle" font-size="12" font-weight="bold" fill="#fff" letter-spacing="-0.6">f4</text><rect x="816.5" y="515.5" width="141" height="93" fill="url(#gBody)" stroke="#000" stroke-width="1.3"/><rect x="817.5" y="516.2" width="139.3" height="38" fill="url(#gHead)"/><circle cx="827.4" cy="526.4" r="9.2" fill="#fff" stroke="#222" stroke-width="1.2"/><path d="M823.8 528.3L827.4 524.6999999999999L831.0 528.3" fill="none" stroke="#2a2a2a" stroke-width="1.9"/><text x="909.80" y="531.6" font-size="12" textLength="23.20" lengthAdjust="spacingAndGlyphs" fill="#1a6fd0" stroke="#1a6fd0" stroke-width="0.22" >OUT</text><rect x="909.8" y="532.6" width="23.2" height="1" fill="#1a6fd0"/><rect x="939" y="526.5" width="3.5" height="1.8" fill="#2f86b0"/><path d="M942 525.4L949.5 522.9V531.9L942 529.4Z" fill="url(#gIco2)"/><rect x="950" y="524.1999999999999" width="5" height="1.8" fill="#2f86b0"/><rect x="950" y="529.0" width="5" height="1.8" fill="#2f86b0"/><text x="912.50" y="547.6" font-size="12" textLength="20.50" lengthAdjust="spacingAndGlyphs" fill="#1a1a1a" stroke="#1a1a1a" stroke-width="0.22" >Тип:</text><text x="880.60" y="574.6" font-size="12" textLength="33.10" lengthAdjust="spacingAndGlyphs" fill="#1a1a1a" stroke="#1a1a1a" stroke-width="0.22" >VALUE</text><circle cx="924" cy="570" r="5" fill="#e4f0f8" stroke="#a6c6d6" stroke-width="1"/><path d="M929 569.2h2.5v-2.4l3.2 3.2l-3.2 3.2v-2.4h-2.5z" fill="#4cbc58"/><circle cx="945.5" cy="570.4" r="7.6" fill="#000" opacity="0.38"/><circle cx="944.7" cy="569.5" r="7.5" fill="url(#gF)"/><text x="945.0" y="573.7" text-anchor="middle" font-size="12" font-weight="bold" fill="#fff" letter-spacing="-0.6">f4</text><text x="868.00" y="596.6" font-size="12" textLength="45.70" lengthAdjust="spacingAndGlyphs" fill="#1a1a1a" stroke="#1a1a1a" stroke-width="0.22" >QUALITY</text><circle cx="924" cy="592" r="5" fill="#e4f0f8" stroke="#a6c6d6" stroke-width="1"/><path d="M929 591.2h2.5v-2.4l3.2 3.2l-3.2 3.2v-2.4h-2.5z" fill="#4cbc58"/><circle cx="945.5" cy="592.4" r="7.6" fill="#000" opacity="0.38"/><circle cx="944.7" cy="591.5" r="7.5" fill="url(#gI)"/><text x="945.0" y="595.7" text-anchor="middle" font-size="12" font-weight="bold" fill="#fff" letter-spacing="-0.6">i4</text><path d="M232.5 130L242.5 135L232.5 140Z" fill="#848484"/><path d="M232.5 152L242.5 157L232.5 162Z" fill="#848484"/><path d="M232.5 174L242.5 179L232.5 184Z" fill="#848484"/><path d="M802.6 90L812.6 95L802.6 100Z" fill="#848484"/><path d="M802.6 116L812.6 121L802.6 126Z" fill="#848484"/><path d="M802.6 142L812.6 147L802.6 152Z" fill="#848484"/><path d="M802.6 168L812.6 173L802.6 178Z" fill="#848484"/><path d="M802.6 194L812.6 199L802.6 204Z" fill="#848484"/><path d="M802.6 220L812.6 225L802.6 230Z" fill="#848484"/><path d="M802.6 250L812.6 255L802.6 260Z" fill="#848484"/><path d="M802.6 524L812.6 529L802.6 534Z" fill="#848484"/><g fill="none" stroke="#848484" stroke-width="2"><path d="M173.5 95H205V118"/><path d="M173.5 121H205V148"/><path d="M173.5 151H205V179H233"/><path d="M208 135H233"/><path d="M208 157H233"/><path d="M476 135H682"/><path d="M688 135H771V124"/><path d="M771 117.5V95H804"/><path d="M476 157H682"/><path d="M685 143.6V121H804"/><path d="M476 179H682"/><path d="M685 169.7V147H804"/><path d="M476 201H594.6"/><path d="M685 195.5V173H804"/><path d="M476 223H598V199H804"/><path d="M476 245H685V225H804"/><path d="M476 267H685V255H804"/><path d="M476 293H512V529H804"/></g></g></svg>
<!-- vertical scrollbar -->
<div class="a" style="left:968px;top:53px;width:17px;height:581px;background:#f0f0f0"></div>
<div class="a" style="left:968px;top:70px;width:17px;height:545px;background:#cdcdcd"></div>
<svg class="a" style="left:968px;top:53px" width="17" height="17"><path d="M4.5 10.5l4-4l4 4" fill="none" stroke="#a0a0a0" stroke-width="1.2"/></svg>
<svg class="a" style="left:968px;top:615px" width="17" height="19"><path d="M4.5 7.5l4 4l4-4" fill="none" stroke="#a0a0a0" stroke-width="1.2"/></svg>
<!-- horizontal scrollbar -->
<div class="a" style="left:6px;top:634px;width:979px;height:17px;background:#fff"></div>
<div class="a" style="left:87px;top:634px;width:898px;height:17px;background:#f0f0f0"></div>
<div class="a" style="left:104px;top:634px;width:832px;height:17px;background:#cdcdcd"></div>
<svg class="a" style="left:87px;top:634px" width="17" height="17"><path d="M10.5 4.5l-4 4l4 4" fill="none" stroke="#a0a0a0" stroke-width="1.2"/></svg>
<svg class="a" style="left:950px;top:634px" width="17" height="17"><path d="M7 4.5l4 4l-4 4" fill="none" stroke="#a0a0a0" stroke-width="1.2"/></svg>
<div class="a" style="left:6px;top:634px;width:55px;height:17px;border:1px solid #a0a0a0;border-left:none;background:#fff"></div>
<svg class="a" style="left:47px;top:634px" width="10" height="17"><path d="M2 6.5l2.5 2.5l2.5-2.5" fill="none" stroke="#606060" stroke-width="1.1"/></svg>
<svg class="a" style="left:64px;top:635px" width="20" height="15" viewBox="0 0 20 15">
 <path d="M2 3.5h16M2 11.8h16M3.5 2v12M12.5 2v12M17 2v12" stroke="#1a80c4" stroke-width="1.4"/>
 <path d="M7.8 2v12M2 7.5h15" stroke="#8c8c8c" stroke-width="1.4"/>
 <rect x="5.5" y="5.3" width="4.6" height="4.6" fill="#fff" stroke="#7a7a7a" stroke-width="1.6"/>
</svg>
<!-- bottom tabs -->
<div class="a" style="left:6px;top:652px;width:980px;height:22px;background:linear-gradient(90deg,#e6f5fb 0%,#cdeff4 40%,#b0ecec 100%)"></div>
<div class="a" style="left:82px;top:651px;width:57px;height:21px;border:1px solid #a0a0a0;border-top-color:#8a8a8a;background:#f0f0f0"></div>
<div class="a" style="left:5px;top:651px;width:78px;height:23px;border:1px solid #a0a0a0;border-top:none;background:#fff"></div>
<div class="a" style="left:2px;top:682px;width:991px;height:1px;background:#9a9a9a"></div>
<svg class="cv" width="993" height="683" viewBox="0 0 993 683"><g font-family="Liberation Sans, sans-serif"><text x="10.70" y="21.9" font-size="12" textLength="48.07" lengthAdjust="spacingAndGlyphs" fill="#1a1a1a" stroke="#1a1a1a" stroke-width="0.22" >IOS_View</text><text x="61.20" y="19" font-size="11" textLength="4.50" lengthAdjust="spacingAndGlyphs" fill="#1a1a1a" stroke="#1a1a1a" stroke-width="0.22" >*</text><text x="28.00" y="45.9" font-size="13" textLength="100.50" lengthAdjust="spacingAndGlyphs" fill="#1c6cd6" stroke="#1c6cd6" stroke-width="0.22" >MyLib.Types.AI1.</text><rect x="27" y="46.6" width="102" height="1.1" fill="#1c6cd6"/><text x="132.70" y="45.9" font-size="13" textLength="55.87" lengthAdjust="spacingAndGlyphs" fill="#1c6cd6" stroke="#1c6cd6" stroke-width="0.22" >IOS_View</text><rect x="132" y="46.6" width="57.5" height="1.1" fill="#1c6cd6"/><text x="195.00" y="46" font-size="12.5" textLength="85.99" lengthAdjust="spacingAndGlyphs" fill="#111" stroke="#111" stroke-width="0.22" >Логический тип</text><text x="327.70" y="45.7" font-size="12.2" textLength="57.19" lengthAdjust="spacingAndGlyphs" fill="#111" stroke="#111" stroke-width="0.22" >MyLib.omx</text><text x="658.60" y="46.1" font-size="12.2" textLength="69.40" lengthAdjust="spacingAndGlyphs" fill="#111" stroke="#111" stroke-width="0.22" >OutMAN_ON</text><text x="9.60" y="647" font-size="11.5" textLength="29.20" lengthAdjust="spacingAndGlyphs" fill="#111" stroke="#111" stroke-width="0.22" >100 %</text><text x="13.10" y="667.3" font-size="12" textLength="61.39" lengthAdjust="spacingAndGlyphs" fill="#111" stroke="#111" stroke-width="0.22" >Диаграмма</text><text x="87.20" y="666.5" font-size="11.8" textLength="45.29" lengthAdjust="spacingAndGlyphs" fill="#111" stroke="#111" stroke-width="0.22" >Таблица</text></g></svg>
</body></html>
